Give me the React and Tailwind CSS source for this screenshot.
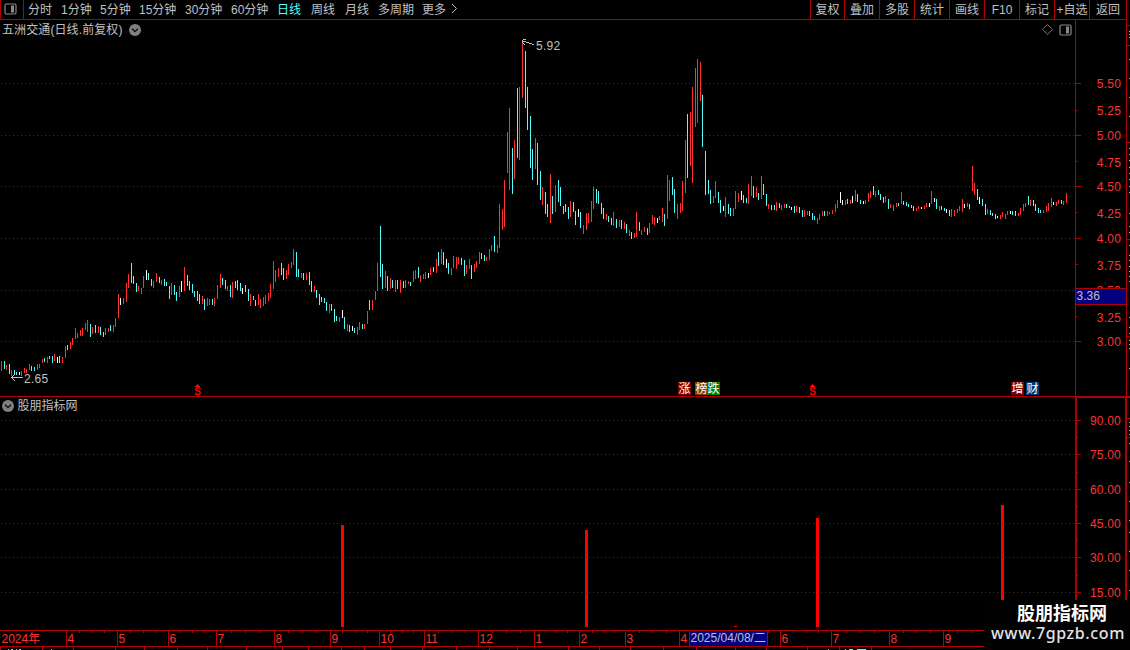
import React from 'react';
import clsx from 'clsx';

const PERIODS = [
  { label: '分时', width: 'w-[33px]' },
  { label: '1分钟', width: 'w-[39px]' },
  { label: '5分钟', width: 'w-[39px]' },
  { label: '15分钟', width: 'w-[46px]' },
  { label: '30分钟', width: 'w-[46px]' },
  { label: '60分钟', width: 'w-[46px]' },
  { label: '日线', width: 'w-[34px]', active: true },
  { label: '周线', width: 'w-[34px]' },
  { label: '月线', width: 'w-[33px]' },
  { label: '多周期', width: 'w-[44px]' },
  { label: '更多', width: 'w-[27px]' },
];

const TOOLS = ['复权', '叠加', '多股', '统计', '画线', 'F10', '标记', '+自选', '返回'];

// x, high, low, colour (r = up, c = down, w = flat)
const BARS = `
1 361 371 r,4 361 369 c,6 365 370 r,9 364 374 c,11 370 376 r,14 370 374 c,16 372 375 c,19 372 375 w,21 371 376 r,
24 368 373 r,26 369 373 r,29 364 370 r,31 366 371 c,34 367 371 c,37 364 370 r,39 364 368 r,42 359 363 r,44 358 362 c,
47 357 363 r,49 356 359 c,52 356 363 c,54 354 361 r,57 357 363 w,59 356 363 c,62 357 363 r,65 346 358 r,67 345 350 c,
70 342 349 r,72 338 345 r,75 328 339 r,77 333 338 r,80 330 336 r,82 328 336 r,85 323 330 r,87 320 332 r,90 324 337 c,
92 327 334 r,95 325 333 c,98 326 333 r,100 327 335 c,103 332 337 c,105 328 335 r,108 328 332 r,110 325 331 c,
113 325 332 r,115 318 327 r,118 294 318 r,120 298 305 w,123 298 304 r,126 283 302 r,128 274 288 r,131 263 283 c,
133 276 284 c,136 283 292 c,138 286 291 r,141 288 294 r,143 276 288 r,146 270 280 w,148 273 280 c,151 279 286 c,
153 281 288 r,156 273 282 r,159 277 283 c,161 280 285 r,164 279 286 c,166 282 286 c,169 286 299 c,171 283 295 r,
174 285 295 c,176 292 301 c,179 286 297 r,181 281 292 w,184 267 291 r,187 275 286 c,189 281 290 c,192 284 293 c,
194 291 297 c,197 291 301 c,199 294 304 c,202 296 304 r,204 299 310 c,207 298 306 r,209 299 305 r,212 299 305 c,
214 298 306 r,217 285 299 r,220 274 288 r,222 278 285 c,225 280 289 c,227 286 291 r,230 285 297 c,232 282 298 r,
235 281 288 c,237 280 290 c,240 283 291 c,242 288 294 w,245 285 292 c,248 289 301 c,250 294 306 r,253 296 300 c,
255 300 306 c,258 294 305 r,260 299 308 r,263 297 306 r,265 295 304 r,268 293 301 r,270 284 298 r,273 261 289 r,
275 270 282 r,278 268 277 r,281 263 275 c,283 268 280 c,286 270 279 r,288 264 275 r,291 262 268 r,293 249 265 r,
296 252 277 c,298 269 277 c,301 273 278 r,303 273 280 c,306 273 280 r,309 272 285 c,311 281 292 c,314 286 292 r,
316 290 298 c,319 294 305 c,321 297 302 c,324 298 303 c,326 302 311 c,329 304 313 r,331 304 311 c,334 309 322 c,
336 316 321 c,339 317 322 r,342 310 318 w,344 317 329 c,347 324 331 r,349 325 332 c,352 326 331 w,354 328 333 c,
357 327 335 r,359 322 330 r,362 324 329 c,364 324 329 r,367 311 324 r,369 300 310 c,372 300 310 r,375 291 300 r,
377 263 291 r,380 226 277 c,382 264 289 c,385 271 288 r,387 276 291 c,390 278 289 r,392 280 288 c,395 280 292 r,
397 280 289 c,400 280 293 r,403 281 288 c,405 280 288 r,408 281 284 r,410 282 286 c,413 271 282 r,415 270 279 r,
418 267 278 c,420 275 282 r,423 274 279 r,425 272 279 r,428 273 278 w,430 268 275 r,433 267 272 c,436 259 273 r,
438 252 266 c,441 249 264 r,443 252 265 c,446 259 268 w,448 263 274 c,451 268 275 r,453 256 268 r,456 257 269 r,
458 257 264 r,461 258 265 c,464 260 276 c,466 265 274 r,469 259 269 r,471 265 279 c,474 264 272 r,476 261 268 r,
479 252 264 r,481 253 259 c,484 255 261 c,486 257 261 r,489 249 260 r,491 245 251 r,494 236 252 c,497 245 253 r,
499 204 248 r,502 209 230 r,504 180 227 r,507 132 173 r,509 108 190 r,512 148 194 c,514 140 179 r,517 88 158 c,
519 87 160 r,522 43 98 r,525 51 108 c,527 87 130 c,530 116 168 c,532 149 180 c,535 138 169 r,537 143 185 c,
540 171 200 c,542 187 205 r,545 192 214 c,547 204 217 c,550 174 223 r,552 196 214 c,555 185 212 r,558 180 202 c,
560 187 206 c,563 206 214 c,565 204 212 c,568 207 219 c,570 201 217 r,573 202 212 c,575 211 225 c,578 209 217 w,
580 212 228 c,583 225 234 r,586 213 230 r,588 213 223 r,591 201 222 r,593 187 209 r,596 189 203 c,598 191 204 c,
601 203 214 c,603 208 219 c,606 214 220 r,608 216 222 c,611 218 225 c,613 212 226 r,616 219 228 c,619 220 227 r,
621 220 229 c,624 222 229 r,626 224 233 c,629 230 236 r,631 232 239 c,634 233 238 r,636 212 237 r,639 222 231 c,
641 230 235 r,644 227 232 r,647 228 235 c,649 223 233 r,652 215 224 r,654 217 225 r,657 218 223 w,659 216 220 r,
662 208 222 r,664 214 226 c,667 175 219 r,669 180 201 r,672 177 195 c,674 189 213 c,677 204 219 r,680 203 213 r,
682 181 211 r,685 140 193 r,687 114 178 c,690 112 166 r,692 87 183 r,695 68 127 r,697 59 123 r,700 62 101 r,
702 95 147 c,705 151 195 c,708 180 194 c,710 190 204 c,713 196 203 r,715 181 198 r,718 192 203 c,720 200 213 c,
723 206 211 w,725 197 217 r,728 204 214 c,730 208 216 c,733 208 216 r,735 191 209 r,738 193 202 r,741 191 200 w,
743 195 203 c,746 198 203 c,748 184 204 r,751 176 196 r,753 186 198 c,756 187 197 r,758 193 200 c,761 176 199 r,
763 184 195 c,766 194 206 c,768 204 209 r,771 205 210 c,774 205 210 c,776 202 211 r,779 203 208 c,781 205 210 r,
784 204 208 r,786 204 208 c,789 206 208 c,791 207 210 w,794 206 213 c,796 206 212 r,799 207 213 c,802 210 217 c,
804 210 217 r,807 211 215 r,809 211 216 c,812 213 220 c,814 216 220 c,817 218 224 r,819 214 220 r,822 211 216 r,
824 211 216 c,827 211 216 r,829 212 214 r,832 210 214 r,835 204 212 r,837 200 208 r,840 192 203 w,842 200 205 w,
845 200 205 r,847 199 204 c,850 200 204 r,852 196 203 w,855 190 201 r,857 194 202 c,860 200 204 c,863 201 204 w,
865 200 204 r,868 193 202 r,870 191 198 r,873 186 195 c,875 191 197 r,878 190 195 c,880 194 200 c,883 197 203 c,
885 196 202 r,888 199 209 c,890 204 208 r,893 205 211 r,896 203 207 r,898 203 206 c,901 192 204 r,903 201 205 c,
906 202 206 c,908 204 207 c,911 205 208 c,913 206 211 c,916 208 211 r,918 206 209 r,921 207 209 w,924 206 209 r,
926 203 207 r,929 203 207 w,931 191 204 r,934 198 202 w,936 199 209 c,939 206 211 r,941 206 210 c,944 208 211 c,
946 209 213 w,949 210 216 c,951 209 217 r,954 210 216 r,957 209 213 r,959 206 211 r,962 199 212 r,964 204 208 w,
967 203 207 r,969 204 209 c,972 166 191 r,974 183 195 r,977 189 200 c,979 197 204 w,982 199 206 c,985 204 215 c,
987 209 214 r,990 210 215 c,992 213 216 c,995 214 219 c,997 216 218 w,1000 215 219 r,1002 212 217 r,1005 214 219 r,
1007 211 215 r,1010 211 214 w,1012 211 215 c,1015 211 216 c,1018 213 216 r,1020 208 215 r,1023 204 211 r,
1025 203 207 r,1028 196 205 c,1030 200 206 r,1033 200 206 c,1035 204 211 c,1038 208 213 c,1040 210 213 c,
1043 210 213 r,1046 206 212 r,1048 203 211 r,1051 198 207 r,1053 202 205 w,1056 202 206 r,1058 200 204 r,
1061 200 204 c,1063 201 205 r,1066 193 203 r
`
  .trim()
  .split(',')
  .map((row) => {
    const [x, high, low, kind] = row.trim().split(' ');
    return { x: +x, high: +high, low: +low, kind };
  });

const BAR_COLORS = { r: '#ff3232', c: '#54fcfc', w: '#ffffff' };

const PRICE_GRID = [83, 135, 186, 238, 290, 341];
const PRICE_MINOR = [110, 161, 212, 264, 316];
const PRICE_LABELS = [
  ['5.50', 88], ['5.25', 115], ['5.00', 140], ['4.75', 167], ['4.50', 191], ['4.25', 218],
  ['4.00', 243], ['3.75', 270], ['3.50', 295], ['3.25', 322], ['3.00', 346],
];

const SIGNAL_GRID = [420, 454, 489, 523, 557, 592];
const SIGNAL_MINOR = [437, 472, 506, 540, 575];
const SIGNAL_LABELS = [
  ['90.00', 425], ['75.00', 459], ['60.00', 494], ['45.00', 528], ['30.00', 562], ['15.00', 597],
];
const SIGNALS = [
  [341, 525],
  [585, 530],
  [816, 518],
  [1001, 505],
];

const MONTHS = [
  [66, '4'], [117, '5'], [168, '6'], [216, '7'], [274, '8'], [330, '9'], [379, '10'], [424, '11'],
  [478, '12'], [534, '1'], [579, '2'], [625, '3'], [679, '4'], [780, '6'], [831, '7'], [889, '8'], [943, '9'],
];
const WEEK_TICKS = [
  79, 92, 104, 130, 143, 155, 180, 192, 204, 231, 245, 260, 288, 302, 316, 342, 355, 367, 390, 402, 413,
  438, 451, 465, 492, 506, 520, 545, 556, 567, 592, 604, 614, 639, 652, 666, 768, 793, 806, 818, 846,
  860, 874, 903, 916, 930, 957, 971,
];
const FOOTER_TICKS = [
  0, 42, 73, 115, 144, 177, 207, 246, 282, 308, 341, 364, 390, 422, 456, 489, 517, 568, 599, 630, 663,
  696, 735, 766, 807, 839, 871,
];

const EDGE_RED = [25, 45, 142, 239, 336, 397, 418, 437];
const EDGE_GRAY = [
  31, 34, 37, 59, 78, 97, 116, 148, 154, 160, 167, 173, 179, 186, 192, 213, 226, 232, 245, 255, 260, 266,
  271, 276, 281, 317, 327, 333, 340, 344, 348, 368, 422, 426, 430, 434, 443, 461, 482, 501, 520, 532,
  551, 570, 590,
];

const LINE = '#b00000';

const PanelIcon = () => (
  <svg width="13" height="12" viewBox="0 0 13 12" fill="none">
    <rect x="1" y="1" width="11" height="10" rx="1.5" stroke="#8a8a8a" strokeWidth="1.2" />
    <rect x="7" y="2.5" width="3" height="7" fill="#8a8a8a" />
  </svg>
);

const DropIcon = () => (
  <svg width="12" height="12" viewBox="0 0 12 12" fill="none">
    <circle cx="6" cy="6" r="6" fill="#808080" />
    <path d="M3 4.7 6 7.5 9 4.7" stroke="#101010" strokeWidth="1.4" />
  </svg>
);

const DottedLine = ({ y }) => (
  <line x1="1" x2="1075" y1={y + 0.5} y2={y + 0.5} stroke="#b00000" strokeDasharray="1 3" />
);

const Toolbar = () => (
  <div className="flex h-5 border-b border-[#b00000] text-[#c0c0c0]">
    <div className="flex w-6 items-center border-x border-[#b00000] pb-0.5 pl-[3px]">
      <PanelIcon />
    </div>
    <div className="flex flex-1 items-center pl-1">
      {PERIODS.map((p) => (
        <span key={p.label} className={clsx(p.width, p.active && 'text-[#54fcfc]')}>
          {p.label}
        </span>
      ))}
      <svg className="mb-0.5 ml-px" width="8" height="11" viewBox="0 0 8 11" fill="none">
        <path d="M2 1 6.500 5.500 2 10" stroke="#c0c0c0" />
      </svg>
    </div>
    <div className="flex border-r border-[#b00000]">
      {TOOLS.map((tool, i) => (
        <div
          key={tool}
          className={clsx(
            'flex items-center justify-center border-l border-[#b00000]',
            i === 0 ? 'w-[34px]' : i === 8 ? 'w-[37px]' : 'w-[35px]'
          )}
        >
          {tool}
        </div>
      ))}
    </div>
  </div>
);

const Badge = ({ className, children }) => (
  <span
    className={clsx(
      'absolute top-[362px] flex h-[13px] w-[13px] items-center justify-center text-white',
      className
    )}
  >
    {children}
  </span>
);

const DividendMark = ({ x }) => (
  <g fill="#ff0000">
    <path d={`M${x - 0.5} 384h1v1h1v1h1v1h-5v-1h1v-1h1z`} />
    <text x={x} y="395" textAnchor="middle" fontSize="10" fontWeight="bold">
      S
    </text>
  </g>
);

const PriceChart = () => (
  <div className="relative h-[376px] w-[1075px]">
    <svg className="block" width="1075" height="376" viewBox="0 20 1075 376" shapeRendering="crispEdges">
      {PRICE_GRID.map((y) => (
        <DottedLine key={y} y={y} />
      ))}
      {BARS.map((b) => (
        <rect key={b.x} x={b.x} y={b.high} width="1" height={b.low - b.high} fill={BAR_COLORS[b.kind]} />
      ))}
      <g stroke="#c0c0c0" fill="none">
        <path d="M526 42.500h3M529 43.500h3M532 44.500h2M522 41.500h4M522.500 40v3M523 39.500h3M523 43.500h1M524 44.500h1" />
        <path d="M11 377.500h12M12.500 376v3M13.500 375v1M14.500 374v1M13.500 379v1M14.500 380v1" />
      </g>
      <g fill="#c0c0c0" letterSpacing="0.3">
        <text x="536" y="50">5.92</text>
        <text x="24" y="383">2.65</text>
      </g>
      <DividendMark x={197.5} />
      <DividendMark x={812.5} />
    </svg>
    <div className="absolute top-0 left-0 flex h-[19px] w-full items-center justify-between pl-[2px] text-[#c0c0c0]">
      <div className="flex items-center gap-[6px]">
        <span className="tracking-[0.1px]">五洲交通(日线.前复权)</span>
        <DropIcon />
      </div>
      <div className="flex items-center gap-[6px] pr-[3px]">
        <svg width="11" height="11" viewBox="0 0 11 11" fill="none">
          <path d="M5.500.5l5 5-5 5-5-5z" stroke="#707070" />
        </svg>
        <PanelIcon />
      </div>
    </div>
    <Badge className="left-[678px] bg-[#800000]">涨</Badge>
    <Badge className="left-[695px] bg-[#804000]">榜</Badge>
    <Badge className="left-[707px] bg-[#008000]">跌</Badge>
    <Badge className="left-[1011px] bg-[#800000]">增</Badge>
    <Badge className="left-[1026px] bg-[#003a70]">财</Badge>
  </div>
);

const PriceAxis = () => (
  <svg className="block" width="55" height="376" viewBox="1075 20 55 376" shapeRendering="crispEdges">
    <g fill={LINE}>
      <rect x="1075" y="20" width="1" height="376" />
      <rect x="1126" y="20" width="1" height="376" />
      {PRICE_GRID.map((y) => (
        <rect key={y} x="1076" y={y} width="5" height="1" />
      ))}
      {PRICE_MINOR.map((y) => (
        <rect key={y} x="1076" y={y} width="2" height="1" />
      ))}
    </g>
    <g fill="#ff3232" textAnchor="end" letterSpacing="0.2">
      {PRICE_LABELS.map(([label, y]) => (
        <text key={label} x="1121" y={y}>
          {label}
        </text>
      ))}
    </g>
    {/* cursor price */}
    <rect x="1076" y="288" width="50" height="17" fill={LINE} />
    <rect x="1076" y="289" width="50" height="15" fill="#000080" />
    <text x="1076.500" y="300" fill="#c0c0c0">
      3.36
    </text>
    <EdgeMarks />
  </svg>
);

// sliver of the neighbouring panel visible at the window edge
const EdgeMarks = () => (
  <>
    {EDGE_RED.map((y) => (
      <rect key={y} x="1127" y={y} width="3" height="1" fill={LINE} />
    ))}
    {EDGE_GRAY.map((y) => (
      <rect key={y} x="1129" y={y} width="1" height="1" fill="#c0c0c0" />
    ))}
  </>
);

const SignalChart = () => (
  <div className="relative h-[233px] w-[1075px]">
    <svg className="block" width="1075" height="233" viewBox="0 397 1075 233" shapeRendering="crispEdges">
      {SIGNAL_GRID.map((y) => (
        <DottedLine key={y} y={y} />
      ))}
      {SIGNALS.map(([x, y]) => (
        <rect key={x} x={x} y={y} width="3" height={627 - y} fill="#ff0000" />
      ))}
      <rect x="734" y="626" width="3" height="1" fill="#ff0000" />
    </svg>
    <div className="absolute top-0 left-0 flex h-[17px] items-center gap-[3.5px] pl-[2px] text-[#c0c0c0]">
      <DropIcon />
      <span>股朋指标网</span>
    </div>
  </div>
);

const SignalAxis = () => (
  <svg className="block" width="55" height="233" viewBox="1075 397 55 233" shapeRendering="crispEdges">
    <g fill={LINE}>
      <rect x="1075" y="397" width="2" height="233" />
      <rect x="1125" y="397" width="2" height="233" />
      <rect x="1075" y="397" width="52" height="1" />
      {SIGNAL_GRID.map((y) => (
        <rect key={y} x="1077" y={y} width="4" height="1" />
      ))}
      {SIGNAL_MINOR.map((y) => (
        <rect key={y} x="1077" y={y} width="1" height="1" />
      ))}
    </g>
    <g fill="#ff3232" textAnchor="end" letterSpacing="0.2">
      {SIGNAL_LABELS.map(([label, y]) => (
        <text key={label} x="1121" y={y}>
          {label}
        </text>
      ))}
    </g>
    <EdgeMarks />
  </svg>
);

const TimeAxis = () => (
  <svg className="block" width="1130" height="20" viewBox="0 630 1130 20" shapeRendering="crispEdges">
    <g fill={LINE}>
      <rect x="0" y="630" width="1130" height="1" />
      <rect x="0" y="646" width="1130" height="1" />
      {MONTHS.map(([x]) => (
        <rect key={x} x={x} y="631" width="1" height="15" />
      ))}
      {WEEK_TICKS.map((x) => (
        <rect key={x} x={x} y="631" width="1" height="2" />
      ))}
      {FOOTER_TICKS.map((x) => (
        <rect key={x} x={x} y="647" width="1" height="3" />
      ))}
    </g>
    <g fill="#ff3232">
      <text x="1.500" y="643">2024年</text>
      {MONTHS.map(([x, label]) => (
        <text key={x} x={x + 1.5} y="643">
          {label}
        </text>
      ))}
    </g>
    {/* cursor date */}
    <rect x="689" y="631" width="79" height="15" fill="#000080" stroke="none" />
    <rect x="689" y="631" width="1" height="15" fill={LINE} />
    <rect x="767" y="631" width="1" height="15" fill={LINE} />
    <text x="690.500" y="642" fill="#c0c0c0">
      2025/04/08/二
    </text>
    <g fill="#c0c0c0">
      <rect x="8" y="649" width="1" height="1" />
      <rect x="11" y="649" width="2" height="1" />
      <rect x="16" y="649" width="1" height="1" />
      <rect x="19" y="649" width="2" height="1" />
      <rect x="51" y="649" width="1" height="1" />
      <rect x="828" y="649" width="1" height="1" />
    </g>
    <g fill="#54fcfc">
      <rect x="845" y="649" width="1" height="1" />
      <rect x="849" y="649" width="4" height="1" />
      <rect x="857" y="649" width="9" height="1" />
    </g>
  </svg>
);

const Watermark = () => (
  <div className="absolute top-[600px] left-[984px] h-[50px] w-[146px] bg-[#020202] text-center">
    <div className="mt-[5px] ml-[10px] text-[18px] leading-[19px] font-bold text-white">股朋指标网</div>
    <div className="ml-[2px] font-['Noto_Sans',sans-serif] text-[16px] leading-[18px] font-medium tracking-[0.6px] whitespace-nowrap text-[#e4e4e4]">
      www.7gpzb.com
    </div>
  </div>
);

const App = () => {
  return (
    <div className="relative h-[650px] w-[1130px] overflow-hidden bg-black font-['Liberation_Sans','Noto_Sans_CJK_SC',sans-serif] text-[12px] leading-[18px] whitespace-nowrap">
      <div className="w-[1127px]">
        <Toolbar />
      </div>
      <div className="flex">
        <PriceChart />
        <PriceAxis />
      </div>
      <div className="h-px w-[1130px] bg-[#b00000]" />
      <div className="flex">
        <SignalChart />
        <SignalAxis />
      </div>
      <TimeAxis />
      <Watermark />
    </div>
  );
};

export default App;
